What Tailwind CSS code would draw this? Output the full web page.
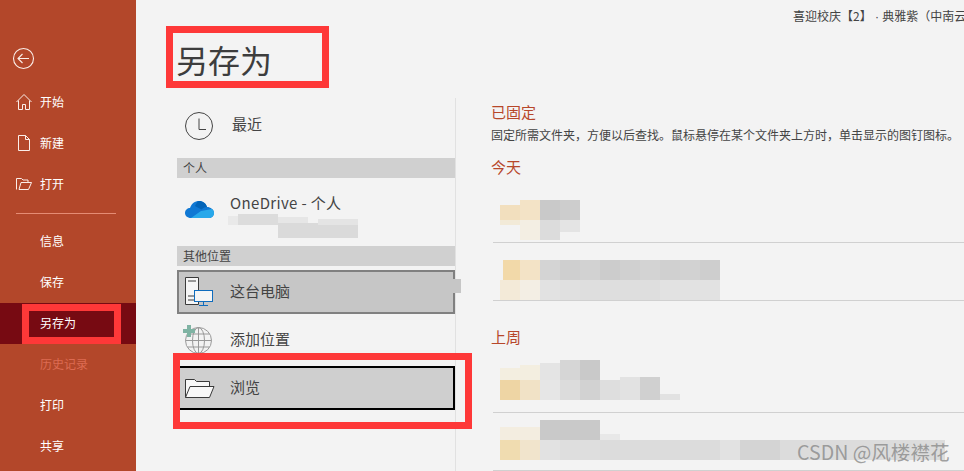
<!DOCTYPE html>
<html lang="zh-CN">
<head>
  <meta charset="UTF-8">
  <title>另存为</title>
  <script src="https://cdn.jsdelivr.net/npm/@tailwindcss/browser@4"></script>
</head>
<body class="font-['Noto_Sans_CJK_SC','Noto_Sans',sans-serif] bg-[#f3f3f3] text-[#444444] overflow-hidden">
  <div class="relative w-[964px] h-[471px] flex overflow-hidden">

    <!-- 侧边栏 -->
    <aside class="w-[136px] h-full shrink-0 bg-[#b3472a] text-white text-[12px]">
      <div class="h-[82px] pt-[47px] pl-[12px]">
        <svg width="23" height="23" viewBox="0 0 23 23" fill="none" stroke="#fbeee9" stroke-width="1.1">
          <circle cx="11.5" cy="11.5" r="10"/>
          <path d="M6 11.5h11M10.5 7l-4.5 4.5 4.5 4.5"/>
        </svg>
      </div>
      <div class="h-[41px] flex items-center pl-[16px] gap-[8px] pb-[2px]">
        <svg width="16" height="16" viewBox="0 0 16 16" fill="none" stroke="#fbeee9"><path d="M.5 8 8 .5 15.5 8M2.500 6.500v9h4v-5h3v5h4v-9"/></svg>
        <span>开始</span>
      </div>
      <div class="h-[41px] flex items-center pl-[16px] gap-[8px] pb-[2px]">
        <svg width="16" height="16" viewBox="0 0 16 16" fill="none" stroke="#fbeee9"><path d="M2.500.5h7l4 4v11h-11zM9.500.5v4h4"/></svg>
        <span>新建</span>
      </div>
      <div class="h-[41px] flex items-center pl-[16px] gap-[8px] pb-[2px]">
        <svg width="16" height="16" viewBox="0 0 16 16" fill="none" stroke="#fbeee9"><path d="M.5 13.500v-11h5l1.500 1.500h5v2.500M3 13.500l2-7h10.500l-3 7z"/></svg>
        <span>打开</span>
      </div>
      <div class="h-px ml-[16px] w-[100px] mt-[8px] mb-[7px] bg-[#e58c74]"></div>
      <div class="h-[41px] flex items-center pl-[40px] pb-[2px]">信息</div>
      <div class="h-[41px] flex items-center pl-[40px] pb-[2px]">保存</div>
      <div class="h-[41px] flex items-center pl-[40px] pb-[2px] bg-[#770a12]">另存为</div>
      <div class="h-[41px] flex items-center pl-[40px] pb-[2px] text-[#dd6b52]">历史记录</div>
      <div class="h-[41px] flex items-center pl-[40px] pb-[2px]">打印</div>
      <div class="h-[41px] flex items-center pl-[40px] pb-[2px]">共享</div>
    </aside>

    <main class="flex-1 min-w-0 flex flex-col">
      <div class="h-[98px] shrink-0">
        <p class="h-[32px] pl-[657px] text-[12px] leading-[31px] whitespace-nowrap overflow-hidden">喜迎校庆【2】<span class="font-['Liberation_Sans']"> · </span>典雅紫（中南云</p>
        <h1 class="pl-[40px] text-[32px] leading-[54px] text-[#3d3d3d]">另存为</h1>
      </div>

      <div class="flex flex-1 min-h-0">
        <!-- 位置列表 -->
        <div class="w-[320px] shrink-0 pl-[41px] border-r border-[#e1e1e1]">
          <div class="mt-[5px] h-[44px] flex items-center">
            <svg class="ml-[8px] mr-[19px] mt-[2px]" width="28" height="28" viewBox="0 0 28 28" fill="none" stroke="#444444"><circle cx="14" cy="14" r="13.500"/><path d="M14 6.500v11h7"/></svg>
            <span class="text-[15px] pb-[2px]">最近</span>
          </div>
          <div class="mt-[11px] h-[20px] bg-[#d0d0d0] pl-[6px] text-[12px] leading-[19px]">个人</div>
          <div class="h-[68px] relative flex items-center pb-[4px]">
            <svg class="ml-[8px] mr-[16px]" width="29" height="18" viewBox="0 0 29 18">
              <path d="M6 17C2 17 0 14.500 0 12c0-3 2.500-5 5-5C6.500 2.500 10 0 14 0c4 0 7 2.500 8 6 3.500 0 7 2.500 7 6 0 3-2.500 5-5 5z" fill="#0f78d4"/>
              <path d="M10 5c1.300-3 3-5 4-5 4 0 7 2.500 8 6-3 .2-4.500 1.500-5.500 2.500z" fill="#0364b8"/>
              <path d="M6 17h18c3 0 5-2.500 5-5 0-1.500-.8-3-2-4l-11 2z" fill="#28a8ea"/>
            </svg>
            <span class="text-[15px] tracking-[0.35px] leading-[20px] mb-[14px]">OneDrive - 个人</span>
            <svg class="absolute left-[51px] top-[36px]" width="136" height="24" viewBox="0 0 136 24" shape-rendering="crispEdges">
              <rect x="0" y="2" width="20" height="9" fill="#e9e9e9"/>
              <rect x="10" y="0" width="40" height="11" fill="#dcdcdc"/>
              <rect x="50" y="3" width="30" height="8" fill="#e6e6e6"/>
              <rect x="50" y="9" width="80" height="15" fill="#dadada"/>
              <rect x="90" y="5" width="40" height="6" fill="#e4e4e4"/>
            </svg>
          </div>
          <div class="h-[20px] bg-[#d0d0d0] pl-[6px] text-[12px] leading-[19px]">其他位置</div>
          <div class="mt-[4px] h-[44px] bg-[#c6c6c6] border-2 border-[#808080] flex items-center relative">
            <svg class="ml-[6px] mr-[15px]" width="30" height="30" viewBox="0 0 30 30" fill="none">
              <path d="M.5.5h13v27H.5zM3 4h8M3 19h6M3 23h6" stroke="#3a3a3a" fill="#f5f5f5"/>
              <rect x="9.500" y="13.500" width="18" height="11" fill="#f5f5f5" stroke="#0f6cbd"/>
              <path d="M18.500 25v3M14 28.500h9" stroke="#0f6cbd"/>
            </svg>
            <span class="text-[15px] pb-[2px]">这台电脑</span>
            <div class="absolute left-[262px] top-[7px] w-[20px] h-[14px] bg-[#c6c6c6]"></div>
          </div>
          <div class="h-[52px] flex items-center">
            <svg class="ml-[6px] mr-[17px]" width="30" height="30" viewBox="0 0 30 30" fill="none" stroke="#999999">
              <circle cx="15.500" cy="15.500" r="13"/>
              <ellipse cx="15.500" cy="15.500" rx="6" ry="13"/>
              <path d="M2.500 15.500h26M4.500 9h22M4.500 22h22M15.500 2.500v26"/>
              <path d="M4 0h4v4h4v4H8v4H4V8H0V4h4z" fill="#7fb3a3" stroke="none"/>
            </svg>
            <span class="text-[15px] pb-[2px]">添加位置</span>
          </div>
          <div class="h-[44px] bg-[#cfcfcf] border-2 border-black flex items-center">
            <svg class="ml-[6px] mr-[15px]" width="30" height="22" viewBox="0 0 30 22" fill="#f8f8f8" stroke="#3a3a3a">
              <path d="M.5 20.500V2.500h9l2 2h13v5"/>
              <path d="M.5 20.500 5 9.500h24l-4.500 11z"/>
            </svg>
            <span class="text-[15px] pb-[2px]">浏览</span>
          </div>
        </div>

        <!-- 最近文件夹 -->
        <div class="flex-1 min-w-0 pl-[35px] overflow-hidden">
          <h2 class="mt-[5px] h-[20px] text-[15px] leading-[18px] text-[#b7472a]">已固定</h2>
          <p class="mt-[2px] h-[20px] text-[12px] leading-[20px] whitespace-nowrap">固定所需文件夹，方便以后查找。鼠标悬停在某个文件夹上方时，单击显示的图钉图标。</p>
          <h2 class="mt-[13px] h-[20px] text-[15px] leading-[18px] text-[#b7472a]">今天</h2>

          <div class="h-[65px] ml-[2px] pt-[22px] border-b border-[#d0d0d0]">
            <svg class="block ml-[7px]" width="80" height="40" viewBox="0 0 80 40" shape-rendering="crispEdges">
              <rect x="0" y="5" width="20" height="15" fill="#f2dfbe"/><rect x="20" y="0" width="20" height="20" fill="#f3e3c6"/>
              <rect x="40" y="0" width="20" height="20" fill="#c9c9c9"/><rect x="60" y="0" width="20" height="20" fill="#cdcdcd"/>
              <rect x="0" y="20" width="20" height="5" fill="#f2ead8"/><rect x="20" y="20" width="20" height="20" fill="#f3eee3"/>
              <rect x="40" y="20" width="20" height="20" fill="#dcdcdc"/><rect x="60" y="20" width="20" height="12" fill="#e4e4e4"/>
            </svg>
          </div>

          <div class="h-[58px] ml-[2px] pt-[17px] border-b border-[#d0d0d0]">
            <svg class="block ml-[7px]" width="220" height="40" viewBox="0 0 220 40" shape-rendering="crispEdges">
              <rect x="3" y="0" width="17" height="20" fill="#f2d9a9"/><rect x="20" y="0" width="20" height="20" fill="#f3e3c6"/>
              <rect x="40" y="0" width="20" height="20" fill="#d4d4d4"/><rect x="60" y="0" width="20" height="20" fill="#cfcfcf"/>
              <rect x="80" y="0" width="20" height="20" fill="#d2d2d2"/><rect x="100" y="0" width="20" height="20" fill="#cccccc"/>
              <rect x="120" y="0" width="20" height="20" fill="#d0d0d0"/><rect x="140" y="0" width="20" height="20" fill="#d3d3d3"/>
              <rect x="160" y="0" width="20" height="20" fill="#d0d0d0"/><rect x="180" y="0" width="20" height="20" fill="#d2d2d2"/>
              <rect x="200" y="0" width="20" height="20" fill="#cecece"/>
              <rect x="0" y="20" width="20" height="20" fill="#f3ead8"/><rect x="20" y="20" width="20" height="20" fill="#f3eee4"/>
              <rect x="40" y="20" width="20" height="20" fill="#e2e2e2"/><rect x="60" y="20" width="20" height="20" fill="#e0e0e0"/>
              <rect x="80" y="20" width="80" height="20" fill="#dedede"/><rect x="160" y="20" width="60" height="20" fill="#e2e2e2"/>
            </svg>
          </div>

          <h2 class="mt-[27px] h-[20px] text-[15px] leading-[18px] text-[#b7472a]">上周</h2>

          <div class="h-[65px] ml-[2px] pt-[12px] border-b border-[#d0d0d0]">
            <svg class="block ml-[7px]" width="180" height="40" viewBox="0 0 180 40" shape-rendering="crispEdges">
              <rect x="0" y="8" width="20" height="12" fill="#f3eee0"/><rect x="20" y="5" width="20" height="15" fill="#f3eee0"/>
              <rect x="40" y="3" width="20" height="17" fill="#e4e4e4"/><rect x="60" y="0" width="20" height="20" fill="#d6d6d6"/>
              <rect x="80" y="0" width="20" height="20" fill="#c9c9c9"/>
              <rect x="0" y="20" width="20" height="20" fill="#eed5a4"/><rect x="20" y="20" width="20" height="20" fill="#f1e2c6"/>
              <rect x="40" y="20" width="20" height="20" fill="#e6e6e6"/><rect x="60" y="20" width="20" height="20" fill="#dcdcdc"/>
              <rect x="80" y="20" width="20" height="20" fill="#d2d2d2"/><rect x="100" y="20" width="20" height="20" fill="#dedede"/>
              <rect x="120" y="17" width="20" height="23" fill="#e2e2e2"/><rect x="140" y="17" width="20" height="23" fill="#d0d0d0"/>
              <rect x="160" y="34" width="20" height="6" fill="#e2e2e2"/>
            </svg>
          </div>

          <div class="h-[58px] ml-[2px] pt-[7px] border-b border-[#d0d0d0]">
            <svg class="block ml-[7px]" width="445" height="40" viewBox="0 0 445 40" shape-rendering="crispEdges">
              <rect x="0" y="7" width="40" height="13" fill="#f3ede0"/>
              <rect x="40" y="0" width="60" height="20" fill="#c9c9c9"/><rect x="100" y="14" width="20" height="6" fill="#e8e8e8"/>
              <rect x="0" y="20" width="20" height="20" fill="#f0dcb0"/><rect x="20" y="20" width="20" height="20" fill="#f1e4cc"/>
              <rect x="40" y="20" width="20" height="20" fill="#e2e2e2"/><rect x="60" y="20" width="40" height="20" fill="#dedede"/>
              <rect x="100" y="20" width="120" height="20" fill="#dcdcdc"/><rect x="220" y="20" width="20" height="20" fill="#e2e2e2"/>
              <rect x="240" y="20" width="40" height="20" fill="#d4d4d4"/><rect x="280" y="20" width="165" height="20" fill="#dcdcdc"/>
            </svg>
          </div>
        </div>
      </div>
    </main>

    <!-- 红色标注框 -->
    <div class="absolute left-[166px] top-[26px] w-[163px] h-[62px] border-[7px] border-[#fe3838]"></div>
    <div class="absolute left-[22px] top-[304px] w-[99px] h-[40px] border-[7px] border-[#fe3838]"></div>
    <div class="absolute left-[173px] top-[353px] w-[299px] h-[76px] border-[7px] border-[#fe3838]"></div>

    <!-- 水印 -->
    <div class="absolute left-[797px] top-[440px] text-[19.6px] leading-[24px] text-[#8a8a8a]/80 whitespace-nowrap">CSDN @风楼襟花</div>
  </div>
</body>
</html>
